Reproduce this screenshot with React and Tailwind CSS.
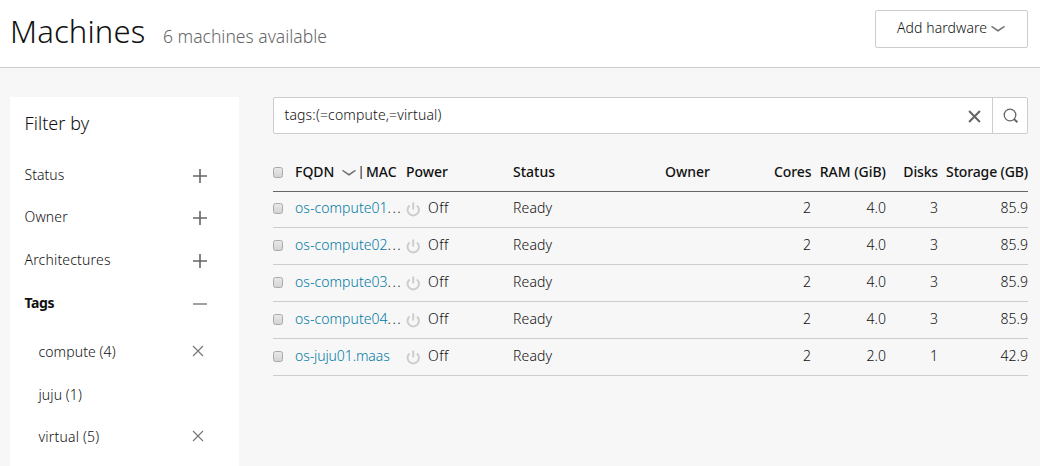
import React from "react";

const facets = [
  { label: "Status", cls: "tracking-[0.05px] pb-[2px]" },
  { label: "Owner", cls: "tracking-[0.15px] pb-[3px]" },
  { label: "Architectures", cls: "tracking-[0.18px] pb-[2px]" },
];
const tags = [
  { label: "compute (4)", active: true, cls: "h-[43px] pb-[1px] tracking-[0.1px]" },
  { label: "juju (1)", active: false, cls: "h-[42px] tracking-[0.1px]" },
  { label: "virtual (5)", active: true, cls: "h-[43px] pb-[1px] tracking-[0.2px]" },
];
const machines = [
  { name: "os-compute01", cut: true, ram: "4.0", disks: 3, storage: "85.9" },
  { name: "os-compute02", cut: true, ram: "4.0", disks: 3, storage: "85.9" },
  { name: "os-compute03", cut: true, ram: "4.0", disks: 3, storage: "85.9" },
  { name: "os-compute04", cut: true, ram: "4.0", disks: 3, storage: "85.9" },
  { name: "os-juju01.maas", cut: false, ram: "2.0", disks: 1, storage: "42.9" },
];

const columns =
  "grid grid-cols-[22px_111px_107px_152px_109px_37px_75px_52px_90px] items-center";

function Chevron({ className }) {
  return (
    <svg className={className} width="14" height="8" viewBox="0 0 14 8" fill="none" stroke="#707070" strokeWidth="1.6">
      <path d="M0.5 1.3C2.8 2.8 5 4.6 7 5.8C9 4.6 11.2 2.8 13.5 1.3" />
    </svg>
  );
}

function Cross({ size, width, color }) {
  return (
    <svg width={size} height={size} viewBox="0 0 12 12" fill="none" stroke={color} strokeWidth={width}>
      <path d="M1 1L11 11M11 1L1 11" />
    </svg>
  );
}

function Toggle({ open }) {
  return (
    <svg className="mt-[0.5px]" width="14" height="14" viewBox="0 0 14 14" fill="none" stroke={open ? "#888" : "#666"} strokeWidth="1.6">
      <path d={open ? "M0 7H14" : "M0 7H14M7 0V14"} />
    </svg>
  );
}

function Power() {
  return (
    <svg width="14" height="15" viewBox="0 0 14 15" fill="none" stroke="#cdcdcd" strokeWidth="2">
      <path d="M3.6 3.4A5.7 5.7 0 1 0 10.9 3.4M7.2 0.5V7.5" />
    </svg>
  );
}

function Box() {
  return (
    <span className="block h-[11px] w-[10px] rounded-[2.5px] border border-[#a9a9a9] bg-linear-to-b from-[#e8e8e8] to-[#d4d4d4]" />
  );
}

export default function App() {
  return (
    <div className="flex h-[466px] w-[1040px] flex-col overflow-hidden bg-[#f7f7f7] font-['Noto_Sans','Open_Sans',sans-serif] text-[14px] font-light text-[#111]">
      <header className="flex h-[68px] shrink-0 items-start justify-between border-b border-[#cdcdcd] bg-white pr-3 pl-[10px]">
        <div className="flex items-baseline pt-[11px]">
          <h1 className="w-[153px] text-[31px] leading-[41px] font-light tracking-[0.15px] whitespace-nowrap">Machines</h1>
          <p className="text-[17.5px] whitespace-nowrap text-[#666]">6 machines available</p>
        </div>
        <button className="mt-[10px] flex h-[38px] w-[153px] items-center rounded-[2px] border border-[#cdcdcd] pl-[21px]">
          <span className="w-[93px] pb-[3px] text-left tracking-[0.08px] whitespace-nowrap">Add hardware</span>
          <Chevron className="ml-[1px]" />
        </button>
      </header>

      <div className="flex min-h-0 flex-1 pt-[29px] pl-[10px]">
        <aside className="w-[229px] shrink-0 bg-white pl-[14.5px]">
          <h2 className="flex h-[57px] items-center pb-[4px] text-[18px] font-light tracking-[0.05px]">Filter by</h2>
          {facets.map((f) => (
            <div key={f.label} className="flex h-[42.7px] items-center justify-between pr-[32px]">
              <span className={f.cls}>{f.label}</span>
              <Toggle />
            </div>
          ))}
          <div className="flex h-[42.7px] items-center justify-between pr-[32px]">
            <span className="pb-[1px] font-bold tracking-[-0.4px]">Tags</span>
            <Toggle open />
          </div>
          <ul className="pt-[6px] pl-[14px]">
            {tags.map((t) => (
              <li key={t.label} className={`flex items-center justify-between pr-[35px] ${t.cls}`}>
                <span>{t.label}</span>
                {t.active && (
                  <span className="pb-[1px]">
                    <Cross size={12} width={1.2} color="#777" />
                  </span>
                )}
              </li>
            ))}
          </ul>
        </aside>

        <main className="ml-[34px] w-[755px]">
          <div className="flex h-[37px] rounded-[2px] border border-[#cdcdcd] bg-white">
            <div className="flex flex-1 items-center pb-[2px] pl-[10.5px] tracking-[0.15px]">tags:(=compute,=virtual)</div>
            <button className="flex w-[36px] items-center justify-center pt-[1px]">
              <Cross size={13} width={1.9} color="#666" />
            </button>
            <button className="flex w-[35px] items-center justify-center border-l border-[#cdcdcd] pt-[1px] pl-[2px]">
              <svg width="16" height="16" viewBox="0 0 16 16" fill="none" stroke="#666" strokeWidth="1.3">
                <circle cx="7" cy="7" r="5.8" />
                <path d="M11 11L14.4 14.2" strokeWidth="2" />
              </svg>
            </button>
          </div>

          <div className={`${columns} mt-[20px] h-[38px] border-b border-[#666] font-medium whitespace-nowrap`}>
            <Box />
            <span className="flex items-center pb-[2px]">
              <span className="w-[47px]">FQDN</span>
              <Chevron className="mt-[2px]" />
              <span className="w-[10px] pl-[1.5px] text-[13px] font-normal">|</span>
              <span>MAC</span>
            </span>
            <span className="pb-[2px] tracking-[-0.05px]">Power</span>
            <span className="pb-[2px]">Status</span>
            <span className="pb-[2px]">Owner</span>
            <span className="pb-[2px] text-right tracking-[-0.1px]">Cores</span>
            <span className="pb-[2px] text-right">RAM (GiB)</span>
            <span className="pb-[2px] text-right tracking-[-0.15px]">Disks</span>
            <span className="pb-[2px] text-right tracking-[-0.15px]">Storage (GB)</span>
          </div>
          {machines.map((m, i) => (
            <div
              key={m.name}
              className={`${columns} border-b border-[#cdcdcd] whitespace-nowrap ${i === 0 ? "h-[36px] pb-[1px]" : "h-[37px]"}`}
            >
              <span className="pb-[1px]">
                <Box />
              </span>
              <span className="pb-[3px]">
                <a className={`text-[#007aa6] ${m.cut ? "tracking-[0.05px]" : "tracking-[-0.1px]"}`}>{m.name}</a>
                {m.cut && <span className="tracking-[1.4px]">...</span>}
              </span>
              <span className="flex items-center gap-[8px]">
                <Power />
                <span className="pb-[3px] tracking-[0.5px]">Off</span>
              </span>
              <span className="pb-[3px] tracking-[0.15px]">Ready</span>
              <span />
              <span className="pb-[3px] text-right">2</span>
              <span className="pb-[3px] text-right">{m.ram}</span>
              <span className="pb-[3px] text-right">{m.disks}</span>
              <span className="pb-[3px] text-right">{m.storage}</span>
            </div>
          ))}
        </main>
      </div>
    </div>
  );
}
